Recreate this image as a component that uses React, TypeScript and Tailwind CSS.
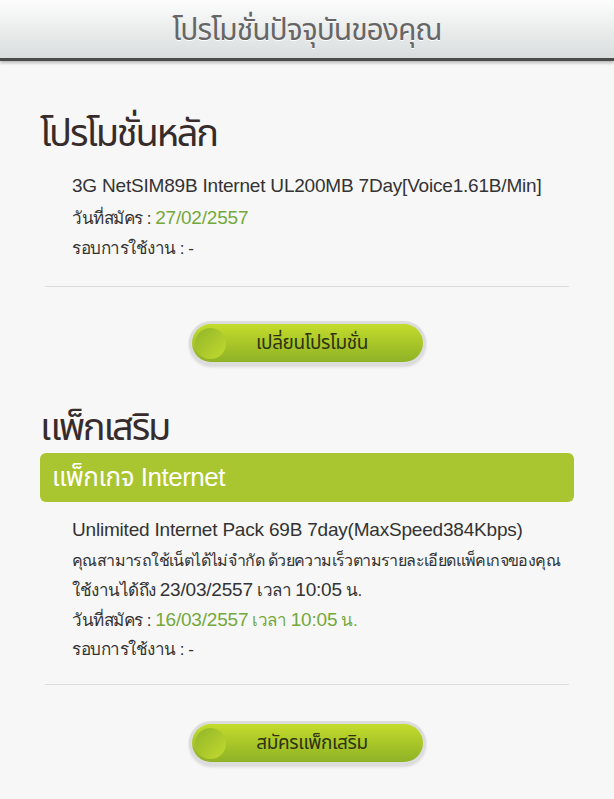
const loopless = "font-['Liberation_Sans','Noto_Sans_Thai','Noto_Sans',sans-serif]";
const body = "font-['Liberation_Sans','Noto_Sans','Noto_Sans_CJK_SC',sans-serif]";

function PillButton({ label }: { label: string }) {
  return (
    <div className="flex justify-center">
      <div className="rounded-full bg-[#dcdcdc] p-[3px] shadow-[0_2px_3px_rgba(0,0,0,0.12)]">
        <div className="flex h-[38px] w-[231px] items-center rounded-full bg-gradient-to-b from-[#c4dc2c] to-[#8fb226] pl-[3px]">
          <div className="h-[31px] w-[31px] rounded-full bg-gradient-to-br from-[#92b52a] to-[#c2db2e]" />
          <span className={`flex-1 pr-[24px] text-center text-[19px] tracking-[-0.4px] text-[#2d3311] ${loopless}`}>{label}</span>
        </div>
      </div>
    </div>
  );
}

function Num({ children }: { children: React.ReactNode }) {
  return <span className="text-[19px] tracking-[-0.2px]">{children}</span>;
}

export default function App() {
  return (
    <div className={`min-h-[799px] w-[614px] bg-[#f7f7f7] ${body}`}>
      <header className="flex h-[61px] items-center justify-center border-b-[3px] border-[#4a4a4a] bg-gradient-to-b from-[#fdfdfd] to-[#d9dddd] shadow-[0_2px_3px_rgba(0,0,0,0.25)]">
        <h1 className={`text-[30px] tracking-[-1px] text-[#666666] [text-shadow:0_1px_0_#ffffff] ${loopless}`}>โปรโมชั่นปัจจุบันของคุณ</h1>
      </header>

      <section className="px-[40px] pt-[46px]">
        <h2 className={`text-[38px] leading-[52px] tracking-[-2.2px] text-[#372c2c] ${loopless}`}>โปรโมชั่นหลัก</h2>
        <div className="mt-[12px] pl-[32px] text-[17px] leading-[30px] text-[#333333]">
          <p className="text-[19px] tracking-[-0.2px]">3G NetSIM89B Internet UL200MB 7Day[Voice1.61B/Min]</p>
          <p className="pt-[2px] tracking-[-0.5px]">วันที่สมัคร : <span className="text-[#74a93a]"><Num>27/02/2557</Num></span></p>
          <p className="tracking-[-0.5px]">รอบการใช้งาน : -</p>
        </div>
        <div className="mx-[5px] mt-[22px] h-px bg-[#dddddd]" />
        <div className="mt-[34px]">
          <PillButton label="เปลี่ยนโปรโมชั่น" />
        </div>
      </section>

      <section className="px-[40px] pt-[36px]">
        <h2 className={`text-[38px] leading-[52px] tracking-[-2.2px] text-[#372c2c] ${loopless}`}>แพ็กเสริม</h2>
        <div className={`flex h-[49px] items-center rounded-[6px] bg-[#a9c52f] px-[12px] text-[26px] tracking-[-0.5px] text-white ${loopless}`}>
          แพ็กเกจ Internet
        </div>
        <div className="mt-[12px] pl-[32px] text-[17px] leading-[29px] text-[#333333]">
          <p className="text-[19px] leading-[32px] tracking-[-0.2px]">Unlimited Internet Pack 69B 7day(MaxSpeed384Kbps)</p>
          <p className="whitespace-nowrap text-[16px] tracking-[-0.6px]">คุณสามารถใช้เน็ตได้ไม่จำกัด ด้วยความเร็วตามรายละเอียดแพ็คเกจของคุณ</p>
          <p className="tracking-[-0.5px]">ใช้งานได้ถึง <Num>23/03/2557</Num> เวลา <Num>10:05</Num> น.</p>
          <p className="tracking-[-0.5px]">วันที่สมัคร : <span className="text-[#74a93a]"><Num>16/03/2557</Num> เวลา <Num>10:05</Num> น.</span></p>
          <p className="tracking-[-0.5px]">รอบการใช้งาน : -</p>
        </div>
        <div className="mx-[5px] mt-[20px] h-px bg-[#dddddd]" />
        <div className="mt-[36px] pb-[36px]">
          <PillButton label="สมัครแพ็กเสริม" />
        </div>
      </section>
    </div>
  );
}
